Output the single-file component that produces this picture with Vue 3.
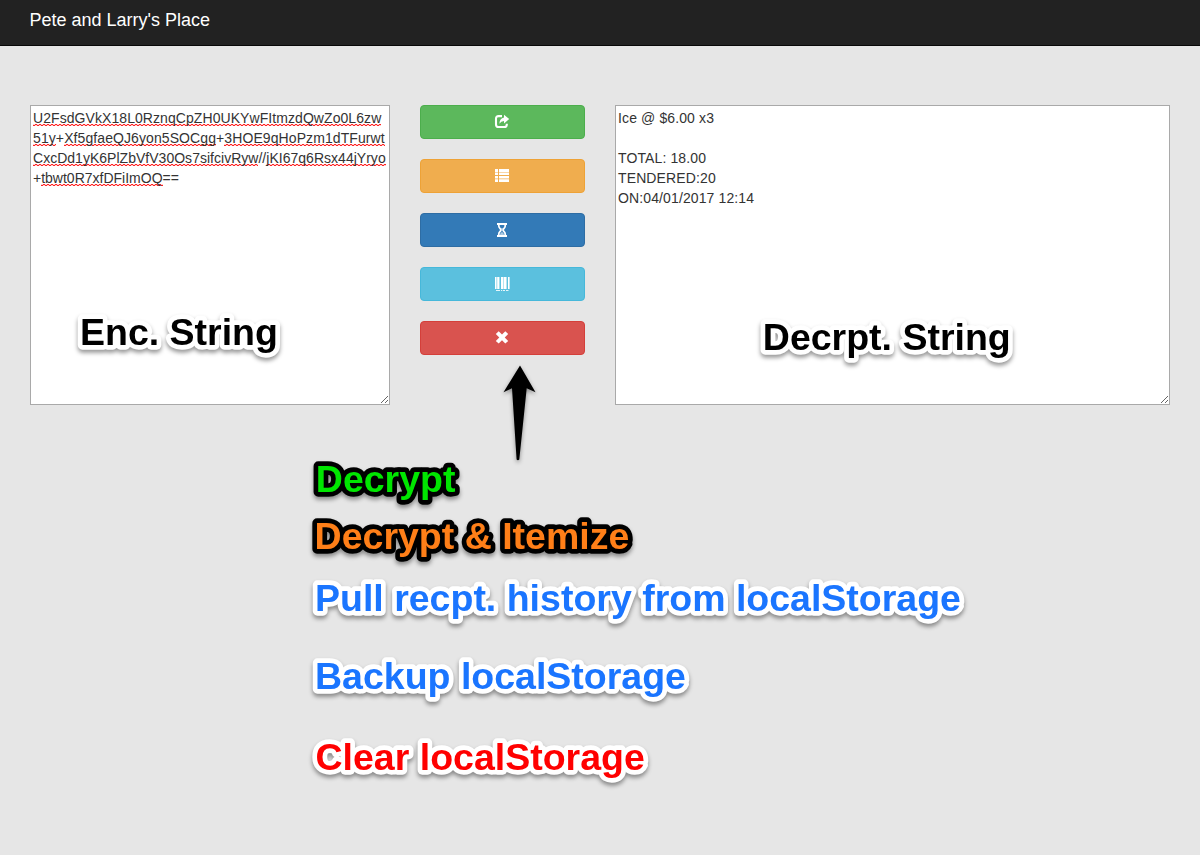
<script setup>
const cipherLines = [
  { tone: 'wide', parts: [['U2FsdGVkX18L0RznqCpZH0UKYwFItmzdQwZo0L6zw', true]] },
  { tone: 'wider', parts: [['51y', true], ['+', false], ['Xf5gfaeQJ6yon5SOCgg', true], ['+', false], ['3HOE9qHoPzm1dTFurwt', true]] },
  { tone: 'slight', parts: [['CxcDd1yK6PlZbVfV30Os7sifcivRyw', true], ['//', false], ['jKI67q6Rsx44jYryo', true]] },
  { tone: 'plain-line', parts: [['+', false], ['tbwt0R7xfDFiImOQ', true], ['==', false]] },
]
const receipt = `Ice @ $6.00 x3

TOTAL: 18.00
TENDERED:20
ON:04/01/2017 12:14`
const actions = [
  { kind: 'success', icon: 'share', label: 'Decrypt' },
  { kind: 'warning', icon: 'list', label: 'Decrypt and itemize' },
  { kind: 'primary', icon: 'hourglass', label: 'Pull history' },
  { kind: 'info', icon: 'barcode', label: 'Backup' },
  { kind: 'danger', icon: 'remove', label: 'Clear' },
]
const notes = [
  { text: 'Enc. String', x: 80, y: 345.3, tone: 'black' },
  { text: 'Decrpt. String', x: 762.8, y: 350.3, tone: 'black' },
  { text: 'Decrypt', x: 315.8, y: 492.3, tone: 'green' },
  { text: 'Decrypt & Itemize', x: 314.6, y: 549.3, tone: 'orange' },
  { text: 'Pull recpt. history from localStorage', x: 315, y: 611.3, tone: 'blue' },
  { text: 'Backup localStorage', x: 315, y: 689.3, tone: 'blue' },
  { text: 'Clear localStorage', x: 315.5, y: 770.3, tone: 'red' },
]
</script>

<template>
  <div class="page">
    <header class="navbar"><span class="brand">Pete and Larry's Place</span></header>
    <main class="row">
      <div class="box cipher">
        <div v-for="(line, i) in cipherLines" :key="i" class="line" :class="line.tone"><span v-for="(part, j) in line.parts" :key="j" :class="{ miss: part[1] }">{{ part[0] }}</span></div>
      </div>
      <div class="actions">
        <button v-for="a in actions" :key="a.kind" class="btn" :class="a.kind" :aria-label="a.label">
          <svg class="icon" width="16" height="16" viewBox="0 0 16 16">
            <template v-if="a.icon === 'share'">
              <path d="M8 2.1H4.6Q2 2.1 2 4.7v5.7Q2 13 4.6 13h5.6q2.6 0 2.6-2.6V9.7" fill="none" stroke="#fff" stroke-width="2.1" />
              <path d="M10 .8l5.2 4.3-5.2 4.3V7Q7 7 5.4 9.8 5.6 4 10 3.4z" fill="#fff" />
            </template>
            <template v-else-if="a.icon === 'list'">
              <path d="M1 1h3v3H1zM1 4.5h3V7H1zM1 8h3v2.6H1zM1 11.2h3V14H1zM5 1h10v3H5zM5 4.5h10V7H5zM5 8h10v2.6H5zM5 11.2h10V14H5z" fill="#fff" />
            </template>
            <template v-else-if="a.icon === 'hourglass'">
              <path d="M3 1h10v2H3zM3 13h10v2H3z" fill="#fff" />
              <path d="M4.8 2.5V4C4.8 6.1 7 6.8 7 8s-2.2 1.9-2.2 4v1.5M11.2 2.5V4C11.2 6.1 9 6.8 9 8s2.2 1.9 2.2 4v1.5" fill="none" stroke="#fff" stroke-width="1.7" />
              <path d="M6 13C6 11 7.4 10.8 8 9.8c.6 1 2 1.2 2 3.2zM6.6 6.2h2.8L8 7.8z" fill="#fff" opacity=".6" />
            </template>
            <template v-else-if="a.icon === 'barcode'">
              <path d="M1 1h1.4v12H1zM3.2 1H5v12H3.2zM7 1h2v12H7zM10 1h2v12h-2zM14 1h1.6v12H14z" fill="#fff" />
              <path d="M5 1h.8v12H5zM12 1h1v12h-1zM2.4 1h.8v12h-.8zM9 1h1v12H9z" fill="#fff" opacity=".55" />
              <path d="M2 14h4v1H2zM7 14h1.2v1H7zM9 14h2v1H9zM12 14h2.5v1H12z" fill="#fff" opacity=".85" />
            </template>
            <path v-else d="M4.7 1.3L8 4.6l3.3-3.3L14.2 4l-3.5 3.4 3.5 3.5-2.9 2.7L8 10.3l-3.3 3.3-2.9-2.7 3.5-3.5L1.8 4z" fill="#fff" />
          </svg>
        </button>
      </div>
      <textarea class="box plain" spellcheck="false" :value="receipt"></textarea>
    </main>
    <svg class="notes" width="1200" height="855" viewBox="0 0 1200 855">
      <path class="arrow" d="M520 365.5L535.5 392.3 526.7 388.2 519.3 459.5Q518 461 516.6 459.5L512 388.2 503.5 392.3z" />
      <text v-for="n in notes" :key="n.text" :x="n.x" :y="n.y" :class="['note', n.tone]">{{ n.text }}</text>
    </svg>
  </div>
</template>

<style>
body {
  margin: 0;
  background: #e6e6e6;
}
</style>

<style scoped>
.page {
  position: relative;
  height: 855px;
  overflow: hidden;
  background: #e6e6e6;
  color: #333;
  font: 14px/20px "Liberation Sans", Arial, sans-serif;
}
.navbar {
  box-sizing: border-box;
  height: 46px;
  padding: 10px 29.5px;
  background: #222;
  border-bottom: 1px solid #080808;
}
.brand {
  color: #fff;
  font-size: 18px;
  line-height: 20px;
}
.row {
  display: flex;
  gap: 30px;
  padding: 59px 30px 0;
}
.box {
  box-sizing: border-box;
  height: 300px;
  margin: 0;
  padding: 2px;
  border: 1px solid #a9a9a9;
  border-radius: 0;
  background: #fff;
  color: #333;
  font: inherit;
  resize: both;
  overflow: auto;
  outline: 0;
}
.cipher {
  flex: none;
  width: 360px;
}
.plain {
  flex: none;
  width: 555px;
  letter-spacing: 0.12px;
}
.line {
  height: 20px;
  white-space: nowrap;
}
.wide { letter-spacing: 0.07px; }
.wider { letter-spacing: 0.09px; }
.slight { letter-spacing: 0.02px; }
.miss {
  background:
    repeating-linear-gradient(90deg, #f22 0 2px, #fcc 2px 4px) 0 100% / 100% 1px no-repeat,
    repeating-linear-gradient(90deg, #fcc 0 2px, #f22 2px 4px) 0 calc(100% - 1px) / 100% 1px no-repeat;
}
.actions {
  display: flex;
  flex: none;
  flex-direction: column;
  gap: 20px;
  width: 165px;
}
.btn {
  display: flex;
  box-sizing: border-box;
  align-items: flex-start;
  justify-content: center;
  height: 34px;
  padding: 8px 1px 0 0;
  border: 1px solid;
  border-radius: 4px;
}
.icon {
  display: block;
}
.success { background: #5cb85c; border-color: #4cae4c; }
.warning { background: #f0ad4e; border-color: #eea236; }
.primary { background: #337ab7; border-color: #2e6da4; }
.info { background: #5bc0de; border-color: #46b8da; }
.danger { background: #d9534f; border-color: #d43f3a; }
.notes {
  position: absolute;
  top: 0;
  left: 0;
  pointer-events: none;
}
.arrow {
  fill: #000;
  filter: drop-shadow(0 2px 2px rgba(0, 0, 0, 0.4));
}
.note {
  font: bold 37.5px "Liberation Sans", Arial, sans-serif;
  paint-order: stroke;
  stroke: #fff;
  stroke-width: 9.4px;
  stroke-linejoin: round;
  filter: drop-shadow(0 3px 2px rgba(0, 0, 0, 0.4));
}
.black { fill: #000; }
.green { fill: #00e600; stroke: #000; }
.orange { fill: #ff7f18; stroke: #000; }
.blue { fill: #1a75ff; }
.red { fill: #f00; }
</style>
